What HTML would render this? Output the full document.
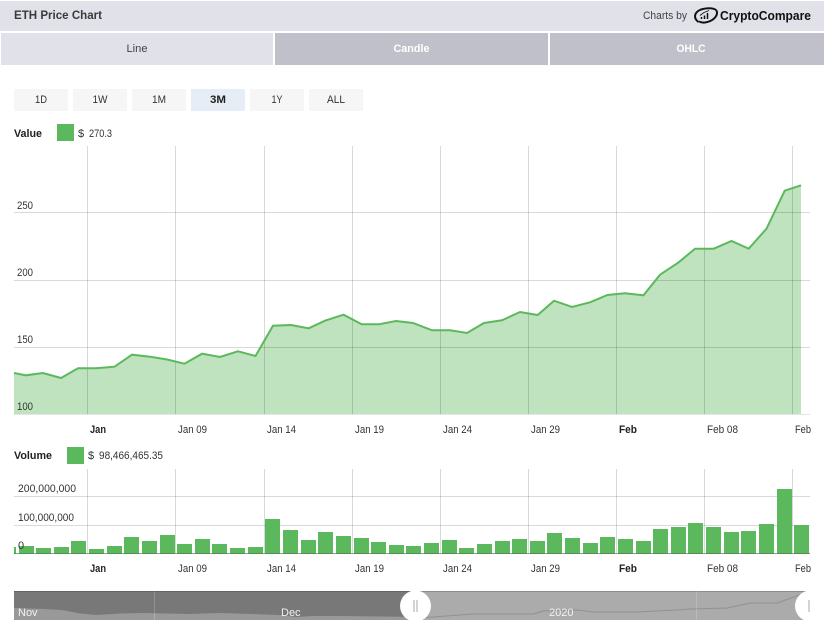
<!DOCTYPE html>
<html><head><meta charset="utf-8"><title>ETH Price Chart</title>
<style>
html,body{margin:0;padding:0;background:#fff;width:824px;height:634px;overflow:hidden}
svg{display:block}
text{font-family:"Liberation Sans",sans-serif;font-size:11px;fill:#333}
.w{fill:#fff}
.b{font-weight:bold;fill:#222}
.n{fill:#f2f2f2;font-size:11px}
</style></head><body>
<svg width="824" height="634" viewBox="0 0 824 634" xmlns="http://www.w3.org/2000/svg">
<rect x="0" y="1" width="824" height="30" fill="#e0e1e9"/>
<text x="14" y="19" class="b" style="font-size:12px;fill:#3a3a3a" textLength="88" lengthAdjust="spacingAndGlyphs">ETH Price Chart</text>
<text x="643" y="19" style="fill:#444" textLength="44" lengthAdjust="spacingAndGlyphs">Charts by</text>
<g fill="none" stroke="#111">
<path d="M698.500 22C693.500 18.500 693.500 12.500 701 9.500C707 7.500 716.500 7.500 717 12C717.500 17 712 21.500 705 22.500C703 22.700 701 22.500 699 21.500" stroke-width="2"/>
<path d="M701.500 19v-2M704.500 19v-3.500M707.500 19v-6" stroke-width="1.500"/>
<path d="M700 15.500l4-3 5-2" stroke-width=".9"/>
</g>
<text x="720" y="20" class="b" style="font-size:13px;fill:#111" textLength="91" lengthAdjust="spacingAndGlyphs">CryptoCompare</text>

<rect x="1" y="33" width="272" height="32" fill="#e0e1e9"/>
<rect x="275" y="33" width="273" height="32" fill="#c0c0cb"/>
<rect x="550" y="33" width="274" height="32" fill="#c0c0cb"/>
<text x="137" y="52" text-anchor="middle" style="fill:#444" textLength="21" lengthAdjust="spacingAndGlyphs">Line</text>
<text x="411.500" y="52" text-anchor="middle" class="w" font-weight="bold" textLength="36" lengthAdjust="spacingAndGlyphs">Candle</text>
<text x="691" y="52" text-anchor="middle" class="w" font-weight="bold" textLength="29" lengthAdjust="spacingAndGlyphs">OHLC</text>

<g fill="#f6f6f6">
<rect x="14" y="89" width="54" height="22"/>
<rect x="73" y="89" width="54" height="22"/>
<rect x="132" y="89" width="54" height="22"/>
<rect x="191" y="89" width="54" height="22" fill="#e6edf6"/>
<rect x="250" y="89" width="54" height="22"/>
<rect x="309" y="89" width="54" height="22"/>
</g>
<g text-anchor="middle">
<text x="41" y="103" textLength="12" lengthAdjust="spacingAndGlyphs">1D</text>
<text x="100" y="103" textLength="15" lengthAdjust="spacingAndGlyphs">1W</text>
<text x="159" y="103" textLength="14" lengthAdjust="spacingAndGlyphs">1M</text>
<text x="218" y="103" class="b" textLength="16" lengthAdjust="spacingAndGlyphs">3M</text>
<text x="277" y="103" textLength="11" lengthAdjust="spacingAndGlyphs">1Y</text>
<text x="336" y="103" textLength="18" lengthAdjust="spacingAndGlyphs">ALL</text>
</g>

<text x="14" y="137" class="b" textLength="28" lengthAdjust="spacingAndGlyphs">Value</text>
<rect x="57" y="124" width="17" height="17" fill="#5cb85c"/>
<text x="78" y="137">$</text>
<text x="89" y="137" textLength="23" lengthAdjust="spacingAndGlyphs">270.3</text>

<path d="M14 373L26 375.300L43 373L61 378L78 368.300L96 368.300L114.500 366.700L132 354.700L150 356.700L167 359.500L184.500 363.700L202 353.700L220 357L238 351.300L255.500 356L273 325.700L291 325L308.700 328.300L325 320.700L343.500 314.700L361.700 324.300L379 324.300L396 321L413 323L432 330.300L450 330.300L467 333L484 323L502 320.300L520 312L537.700 315L554 300.700L572 307L590 302.300L607.500 295L625 293.300L643.500 295.300L660 274.700L678.700 262.300L695 248.700L713.700 248.700L731.500 241L748.700 248.700L766.500 228.700L784.700 190.700L801 185.300V414.500H14Z" fill="#c0e3bf"/>
<g stroke="#000" stroke-opacity=".15" stroke-width="1" fill="none">
<path d="M87.500 146V414M175.500 146V414M264.500 146V414M352.500 146V414M440.500 146V414M528.500 146V414M616.500 146V414M704.500 146V414M792.500 146V414"/>
<path d="M14 212.500H810M14 280.500H810M14 347.500H810"/>
</g>
<path d="M14 414.500H810" stroke="#e6e6e6" stroke-width="1"/>
<path d="M14 373L26 375.300L43 373L61 378L78 368.300L96 368.300L114.500 366.700L132 354.700L150 356.700L167 359.500L184.500 363.700L202 353.700L220 357L238 351.300L255.500 356L273 325.700L291 325L308.700 328.300L325 320.700L343.500 314.700L361.700 324.300L379 324.300L396 321L413 323L432 330.300L450 330.300L467 333L484 323L502 320.300L520 312L537.700 315L554 300.700L572 307L590 302.300L607.500 295L625 293.300L643.500 295.300L660 274.700L678.700 262.300L695 248.700L713.700 248.700L731.500 241L748.700 248.700L766.500 228.700L784.700 190.700L801 185.300" fill="none" stroke="#5cb85c" stroke-width="2"/>
<text x="17" y="209" textLength="16" lengthAdjust="spacingAndGlyphs">250</text>
<text x="17" y="276" textLength="16" lengthAdjust="spacingAndGlyphs">200</text>
<text x="17" y="343" textLength="16" lengthAdjust="spacingAndGlyphs">150</text>
<text x="17" y="410" textLength="16" lengthAdjust="spacingAndGlyphs">100</text>

<g>
<text x="90" y="433" class="b" textLength="16" lengthAdjust="spacingAndGlyphs">Jan</text>
<text x="178" y="433" textLength="29" lengthAdjust="spacingAndGlyphs">Jan 09</text>
<text x="267" y="433" textLength="29" lengthAdjust="spacingAndGlyphs">Jan 14</text>
<text x="355" y="433" textLength="29" lengthAdjust="spacingAndGlyphs">Jan 19</text>
<text x="443" y="433" textLength="29" lengthAdjust="spacingAndGlyphs">Jan 24</text>
<text x="531" y="433" textLength="29" lengthAdjust="spacingAndGlyphs">Jan 29</text>
<text x="619" y="433" class="b" textLength="18" lengthAdjust="spacingAndGlyphs">Feb</text>
<text x="707" y="433" textLength="31" lengthAdjust="spacingAndGlyphs">Feb 08</text>
<text x="795" y="433" textLength="16" lengthAdjust="spacingAndGlyphs">Feb</text>
</g>

<text x="14" y="459" class="b" textLength="38" lengthAdjust="spacingAndGlyphs">Volume</text>
<rect x="67" y="447" width="17" height="17" fill="#5cb85c"/>
<text x="88" y="459">$</text>
<text x="99" y="459" textLength="64" lengthAdjust="spacingAndGlyphs">98,466,465.35</text>

<g stroke="#000" stroke-opacity=".15" stroke-width="1" fill="none">
<path d="M87.500 469V553M175.500 469V553M264.500 469V553M352.500 469V553M440.500 469V553M528.500 469V553M616.500 469V553M704.500 469V553M792.500 469V553"/>
<path d="M14 496.500H810M14 525.500H810"/>
</g>
<path fill="#5cb85c" d="M14 547h2v7h-2zM19 546h15v8h-15zM36 548h15v6h-15zM54 547h15v7h-15zM71 541h15v13h-15zM89 549h15v5h-15zM107 546h15v8h-15zM124 537h15v17h-15zM142 541h15v13h-15zM160 535h15v19h-15zM177 544h15v10h-15zM195 539h15v15h-15zM212 544h15v10h-15zM230 548h15v6h-15zM248 547h15v7h-15zM265 519h15v35h-15zM283 530h15v24h-15zM301 540h15v14h-15zM318 532h15v22h-15zM336 536h15v18h-15zM354 538h15v16h-15zM371 542h15v12h-15zM389 545h15v9h-15zM406 546h15v8h-15zM424 543h15v11h-15zM442 540h15v14h-15zM459 548h15v6h-15zM477 544h15v10h-15zM495 541h15v13h-15zM512 539h15v15h-15zM530 541h15v13h-15zM547 533h15v21h-15zM565 538h15v16h-15zM583 543h15v11h-15zM600 537h15v17h-15zM618 539h15v15h-15zM636 541h15v13h-15zM653 529h15v25h-15zM671 527h15v27h-15zM688 523h15v31h-15zM706 527h15v27h-15zM724 532h15v22h-15zM741 531h15v23h-15zM759 524h15v30h-15zM777 489h15v65h-15zM794 525h15v29h-15z"/>
<path d="M14 553.500H810" stroke="#4a7d4a" stroke-opacity=".7" stroke-width="1"/>
<text x="18" y="492" textLength="58" lengthAdjust="spacingAndGlyphs">200,000,000</text>
<text x="18" y="521" textLength="56" lengthAdjust="spacingAndGlyphs">100,000,000</text>
<text x="18" y="549">0</text>

<g>
<text x="90" y="572" class="b" textLength="16" lengthAdjust="spacingAndGlyphs">Jan</text>
<text x="178" y="572" textLength="29" lengthAdjust="spacingAndGlyphs">Jan 09</text>
<text x="267" y="572" textLength="29" lengthAdjust="spacingAndGlyphs">Jan 14</text>
<text x="355" y="572" textLength="29" lengthAdjust="spacingAndGlyphs">Jan 19</text>
<text x="443" y="572" textLength="29" lengthAdjust="spacingAndGlyphs">Jan 24</text>
<text x="531" y="572" textLength="29" lengthAdjust="spacingAndGlyphs">Jan 29</text>
<text x="619" y="572" class="b" textLength="18" lengthAdjust="spacingAndGlyphs">Feb</text>
<text x="707" y="572" textLength="31" lengthAdjust="spacingAndGlyphs">Feb 08</text>
<text x="795" y="572" textLength="16" lengthAdjust="spacingAndGlyphs">Feb</text>
</g>

<clipPath id="nav"><rect x="14" y="591" width="796" height="29"/></clipPath>
<g clip-path="url(#nav)">
<rect x="14" y="591" width="402" height="29" fill="#787878"/>
<rect x="416" y="591" width="394" height="29" fill="#ababab"/>
<path d="M14 608L43 609L62 610L80 613.500L97 615L120 613.500L143 613L187 614L220 613L280 615L297 617L313 616L340 616L416 617V620H14Z" fill="#999"/>
<path d="M416 618L433 617L473 614L507 614L533 614L543 611L577 610L594 612L637 612L677 610L691 609L727 608L751 603L777 603L794 597L808 592" fill="none" stroke="#919191" stroke-width="1"/>
<path d="M154.500 591V620M696.500 591V620" stroke="#fff" stroke-opacity=".2"/>
<path d="M14 591.500H810" stroke="#000" stroke-opacity=".18"/>
<text x="18" y="616" class="n">Nov</text>
<text x="281" y="616" class="n">Dec</text>
<text x="549" y="616" class="n">2020</text>
<circle cx="415.500" cy="606" r="15.500" fill="#fff"/>
<path d="M414 600V612M417 600V612" stroke="#aaa" stroke-width="1"/>
<circle cx="810.500" cy="606" r="15.500" fill="#fff"/>
<path d="M809 600V612" stroke="#aaa" stroke-width="1"/>
</g>
</svg>
</body></html>
